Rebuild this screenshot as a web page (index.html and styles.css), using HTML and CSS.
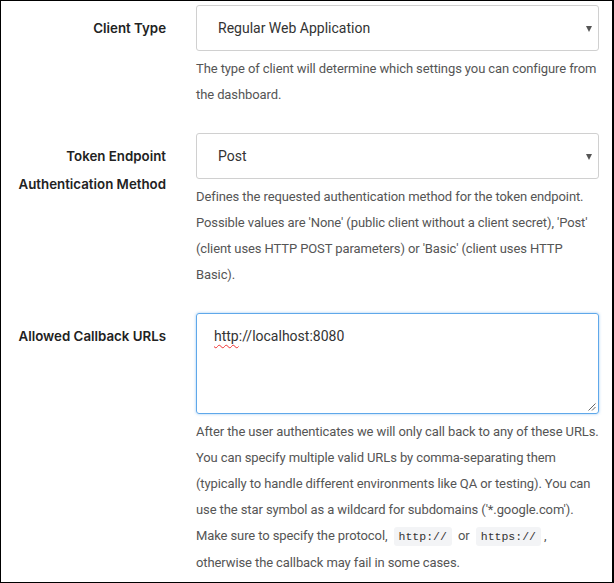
FILE: index.html
```html
<!DOCTYPE html>
<html>
<head>
<meta charset="utf-8">
<link rel="stylesheet" href="styles.css">
</head>
<body>
<div class="frame">
  <div class="row">
    <div class="label">Client Type</div>
    <div class="control">
      <div class="select"><span>Regular Web Application</span><span class="arrow"></span></div>
      <p class="help">The type of client will determine which settings you can configure from<br>the dashboard.</p>
    </div>
  </div>
  <div class="row">
    <div class="label">Token Endpoint Authentication Method</div>
    <div class="control">
      <div class="select"><span>Post</span><span class="arrow"></span></div>
      <p class="help">Defines the requested authentication method for the token endpoint.<br>Possible values are 'None' (public client without a client secret), 'Post'<br>(client uses HTTP POST parameters) or 'Basic' (client uses HTTP<br>Basic).</p>
    </div>
  </div>
  <div class="row">
    <div class="label">Allowed Callback URLs</div>
    <div class="control">
      <div class="textarea"><span class="spell">http</span>://localhost:8080
        <svg class="grip" width="9" height="9" viewBox="0 0 9 9"><path d="M8.5 1.5 L1.5 8.5 M8.5 5 L5 8.5" stroke="#666" stroke-width="1" fill="none"/></svg>
      </div>
      <p class="help">After the user authenticates we will only call back to any of these URLs.<br>You can specify multiple valid URLs by comma-separating them<br>(typically to handle different environments like QA or testing). You can<br>use the star symbol as a wildcard for subdomains ('*.google.com').<br>Make sure to specify the protocol, <code>http://</code> or <code>https://</code>,<br>otherwise the callback may fail in some cases.</p>
    </div>
  </div>
</div>
</body>
</html>
```

FILE: styles.css
```css
html, body {
  margin: 0;
  padding: 0;
  background: #fff;
}
.frame {
  width: 614px;
  height: 583px;
  box-sizing: border-box;
  border: 1px solid #000;
  border-right-width: 2px;
  padding-top: 4px;
  overflow: hidden;
  font-family: Roboto, "Liberation Sans", sans-serif;
  color: #333;
}
.row {
  display: grid;
  grid-template-columns: 165px 403px;
  column-gap: 30px;
  margin-bottom: 25px;
}
.label {
  text-align: right;
  font-family: Inter, "Noto Sans", sans-serif;
  font-weight: 600;
  font-size: 13.3px;
  line-height: 28px;
  padding-top: 9px;
  color: #222;
}
.control {
  min-width: 0;
}
.select {
  position: relative;
  height: 46px;
  box-sizing: border-box;
  border: 1px solid #d0d0d0;
  border-radius: 3px;
  padding-left: 21px;
  font-size: 14px;
  line-height: 44px;
  color: #333;
}
.arrow {
  position: absolute;
  right: 6px;
  top: 20px;
  width: 0;
  height: 0;
  border-left: 3.5px solid transparent;
  border-right: 3.5px solid transparent;
  border-top: 6px solid #555;
}
.help {
  margin: 5px 0 0;
  font-size: 13px;
  letter-spacing: -0.1px;
  line-height: 26px;
  color: #555;
  white-space: nowrap;
}
.textarea {
  position: relative;
  height: 101px;
  box-sizing: border-box;
  border: 1px solid #5fa8ea;
  border-radius: 3px;
  box-shadow: 0 0 3px rgba(95, 168, 234, 0.6);
  padding: 12px 17px;
  font-size: 14px;
  line-height: 20px;
  color: #333;
}
.spell {
  text-decoration: underline wavy #e33;
  text-decoration-thickness: 1px;
  text-underline-offset: 3px;
}
.grip {
  position: absolute;
  right: 2px;
  bottom: 2px;
}
code {
  font-family: "Liberation Mono", monospace;
  font-size: 11.5px;
  letter-spacing: 0;
  background: #f3f4f6;
  border-radius: 3px;
  padding: 3px 5px;
  margin: 0 3px;
  color: #333;
}
```
